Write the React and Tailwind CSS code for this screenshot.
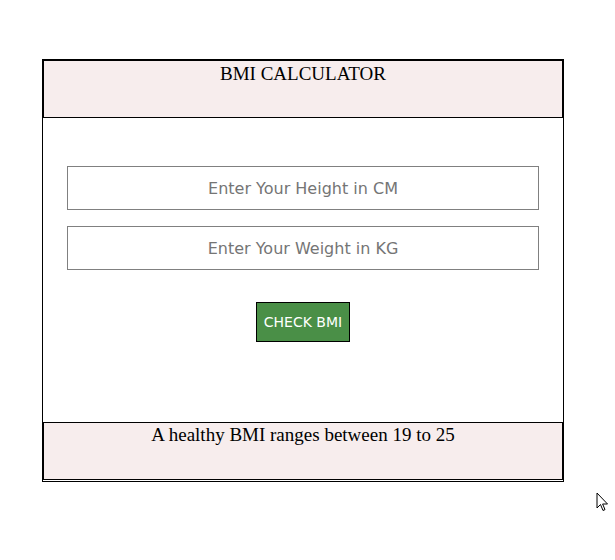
export default function App() {
  return (
    <div className="w-[615px] h-[560px] bg-white relative overflow-hidden">
      <div className="pt-[59px] pl-[42px]">
        <div className="w-[522px] border border-black pb-px">
          <div className="h-[58px] border border-black bg-[#f7eded] text-center font-['Liberation_Serif',serif] text-[19px] leading-[22px] pt-[2px] text-black">
            BMI CALCULATOR
          </div>
          <div className="h-[304px] pt-[48px] flex flex-col items-center font-['DejaVu_Sans',sans-serif]">
            <input
              className="w-[472px] h-[44px] border border-[#808080] text-center text-[16px] placeholder:text-[#757575] outline-none"
              placeholder="Enter Your Height in CM"
            />
            <input
              className="mt-[16px] w-[472px] h-[44px] border border-[#808080] text-center text-[16px] placeholder:text-[#757575] outline-none"
              placeholder="Enter Your Weight in KG"
            />
            <button className="mt-[32px] w-[94px] h-[40px] bg-[#4a8f47] border border-black text-white text-[14px] pt-px">
              CHECK BMI
            </button>
          </div>
          <div className="h-[58px] border border-black bg-[#f7eded] text-center font-['Liberation_Serif',serif] text-[19px] leading-[22px] pt-px text-black">
            A healthy BMI ranges between 19 to 25
          </div>
        </div>
      </div>
      <svg className="absolute left-[596px] top-[492px]" width="14" height="21" viewBox="0 0 14 21">
        <path d="M1 1 L1 16 L4.5 12.5 L7 18.5 L9 17.6 L6.6 12 L11.5 12 Z" fill="white" stroke="black" strokeWidth="1" strokeLinejoin="round" />
      </svg>
    </div>
  );
}
